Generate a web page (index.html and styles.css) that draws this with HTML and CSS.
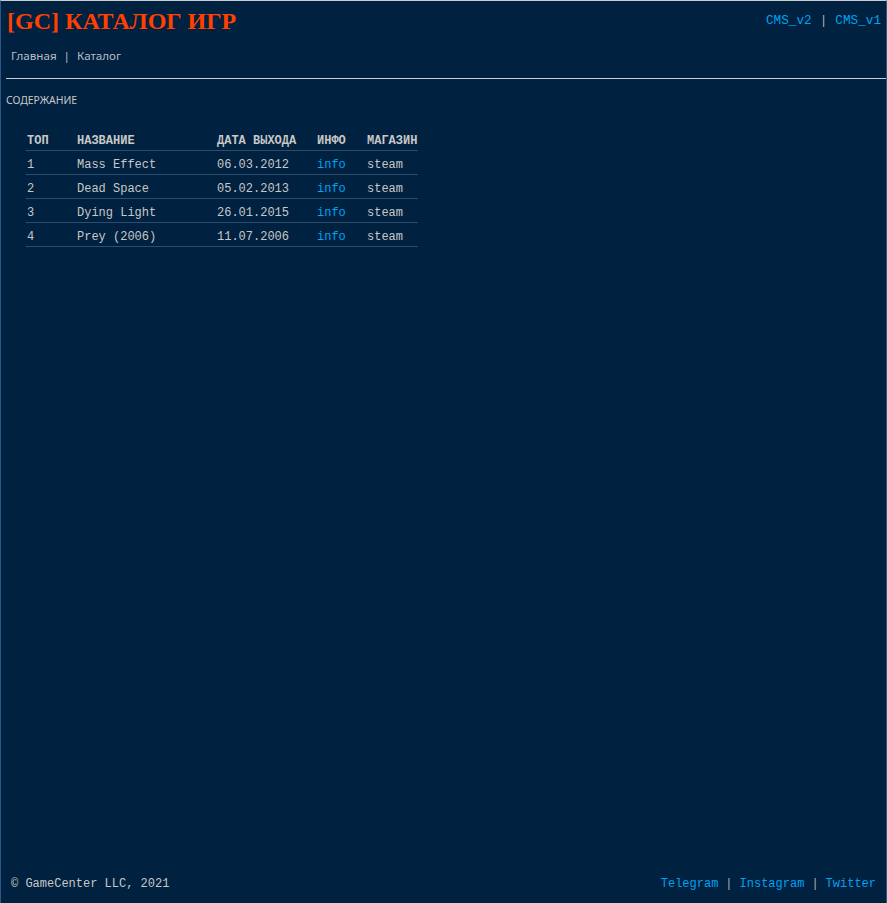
FILE: index.html
```html
<!DOCTYPE html>
<html lang="ru">
<head>
<meta charset="utf-8">
<title>[GC] Каталог игр</title>
<link rel="stylesheet" href="styles.css">
</head>
<body>
<div class="page">
  <header class="top">
    <h1 class="brand">[GC] КАТАЛОГ ИГР</h1>
    <nav class="cms">
      <a href="#" class="link">CMS_v2</a><span class="sep">|</span><a href="#" class="link">CMS_v1</a>
    </nav>
  </header>
  <nav class="menu">
    <a href="#" class="menu-item">Главная</a><span class="menu-sep">|</span><a href="#" class="menu-item">Каталог</a>
  </nav>
  <main class="content">
    <div class="section-title">СОДЕРЖАНИЕ</div>
    <table class="games">
      <thead>
        <tr><th class="c-top">ТОП</th><th class="c-name">НАЗВАНИЕ</th><th class="c-date">ДАТА ВЫХОДА</th><th class="c-info">ИНФО</th><th class="c-shop">МАГАЗИН</th></tr>
      </thead>
      <tbody>
        <tr><td>1</td><td>Mass Effect</td><td>06.03.2012</td><td><a href="#" class="link">info</a></td><td>steam</td></tr>
        <tr><td>2</td><td>Dead Space</td><td>05.02.2013</td><td><a href="#" class="link">info</a></td><td>steam</td></tr>
        <tr><td>3</td><td>Dying Light</td><td>26.01.2015</td><td><a href="#" class="link">info</a></td><td>steam</td></tr>
        <tr><td>4</td><td>Prey (2006)</td><td>11.07.2006</td><td><a href="#" class="link">info</a></td><td>steam</td></tr>
      </tbody>
    </table>
  </main>
  <footer class="foot">
    <span class="copy">© GameCenter LLC, 2021</span>
    <span class="social"><a href="#" class="link">Telegram</a><span class="fsep">|</span><a href="#" class="link">Instagram</a><span class="fsep">|</span><a href="#" class="link">Twitter</a></span>
  </footer>
</div>
</body>
</html>
```
FILE: styles.css
```css
html, body {
  margin: 0;
  padding: 0;
  background: #00213f;
}
.page {
  box-sizing: border-box;
  min-height: 100vh;
  display: flex;
  flex-direction: column;
  background: #00213f;
  border-top: 1px solid #c9ccd0;
  border-left: 1px solid #2a5886;
  border-right: 1px solid #2a5886;
  color: #c8c8c8;
  font-family: "Liberation Mono", monospace;
  font-size: 12px;
}
.link {
  color: #00a2f2;
  text-decoration: none;
}
.top {
  display: flex;
  justify-content: space-between;
  align-items: center;
  padding: 6px 5px 0 6px;
}
.brand {
  margin: 0;
  font-family: "Liberation Serif", serif;
  font-weight: bold;
  font-size: 24px;
  line-height: 28px;
  color: #ff4000;
}
.cms {
  line-height: 16px;
  font-size: 12.7px;
}
.sep {
  color: #a9b0b8;
  margin: 0 8px;
}
.menu {
  margin-top: 13px;
  margin-left: 5px;
  padding-left: 5px;
  padding-bottom: 14px;
  font-family: "Noto Sans", sans-serif;
  font-size: 11.6px;
  line-height: 16px;
  border-bottom: 1px solid #c9ced4;
}
.menu-item {
  color: #b8bec4;
  text-decoration: none;
}
.menu-sep {
  color: #b8bec4;
  margin: 0 7px;
}
.content {
  flex: 1;
  padding-left: 5px;
}
.section-title {
  margin-top: 13px;
  font-family: "Noto Sans", sans-serif;
  font-size: 10.4px;
  line-height: 16px;
  color: #c8c8c8;
}
.games {
  margin-top: 19px;
  margin-left: 20px;
  border-collapse: collapse;
  font-size: 12px;
}
.games th, .games td {
  padding: 5px 0 0 1px;
  height: 18px;
  line-height: 18px;
  text-align: left;
  border-bottom: 1px solid #2c4d6e;
  white-space: nowrap;
}
.games th {
  font-weight: bold;
  color: #c8c8c8;
}
.c-top { width: 49px; }
.c-name { width: 139px; }
.c-date { width: 99px; }
.c-info { width: 49px; }
.c-shop { width: 51px; }
.foot {
  display: flex;
  justify-content: space-between;
  line-height: 16px;
  padding: 0 10px 11px 10px;
}
.fsep {
  color: #a9b0b8;
  margin: 0 7px;
}
```
